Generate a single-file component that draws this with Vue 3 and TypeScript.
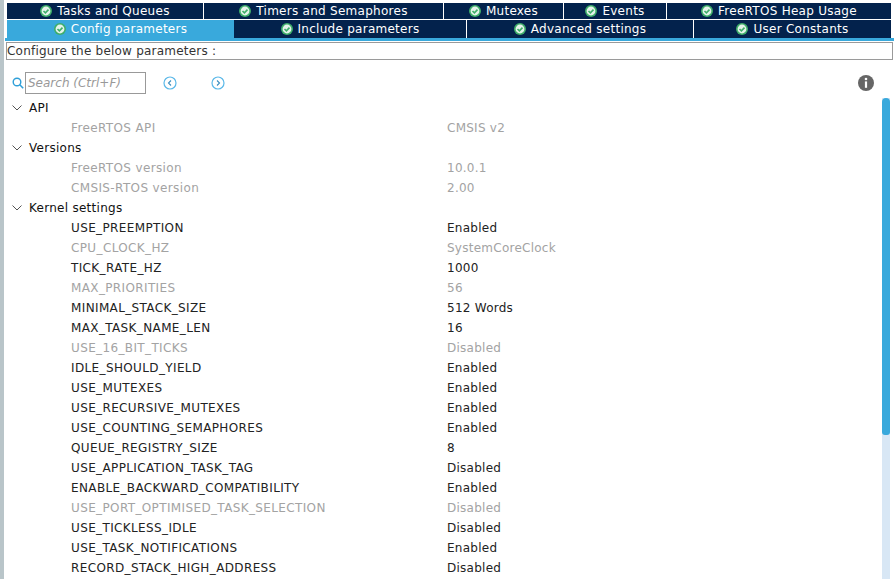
<script setup lang="ts">
interface Row {
  label: string
  value?: string
  off?: boolean
}

const topTabs = [
  { label: 'Tasks and Queues', width: 197 },
  { label: 'Timers and Semaphores', width: 240 },
  { label: 'Mutexes', width: 120 },
  { label: 'Events', width: 103 },
  { label: 'FreeRTOS Heap Usage', width: 224 },
]

const bottomTabs = [
  { label: 'Config parameters', width: 227, active: true },
  { label: 'Include parameters', width: 233 },
  { label: 'Advanced settings', width: 227 },
  { label: 'User Constants', width: 197 },
]

const groups: { title: string; rows: Row[] }[] = [
  { title: 'API', rows: [{ label: 'FreeRTOS API', value: 'CMSIS v2', off: true }] },
  {
    title: 'Versions',
    rows: [
      { label: 'FreeRTOS version', value: '10.0.1', off: true },
      { label: 'CMSIS-RTOS version', value: '2.00', off: true },
    ],
  },
  {
    title: 'Kernel settings',
    rows: [
      { label: 'USE_PREEMPTION', value: 'Enabled' },
      { label: 'CPU_CLOCK_HZ', value: 'SystemCoreClock', off: true },
      { label: 'TICK_RATE_HZ', value: '1000' },
      { label: 'MAX_PRIORITIES', value: '56', off: true },
      { label: 'MINIMAL_STACK_SIZE', value: '512 Words' },
      { label: 'MAX_TASK_NAME_LEN', value: '16' },
      { label: 'USE_16_BIT_TICKS', value: 'Disabled', off: true },
      { label: 'IDLE_SHOULD_YIELD', value: 'Enabled' },
      { label: 'USE_MUTEXES', value: 'Enabled' },
      { label: 'USE_RECURSIVE_MUTEXES', value: 'Enabled' },
      { label: 'USE_COUNTING_SEMAPHORES', value: 'Enabled' },
      { label: 'QUEUE_REGISTRY_SIZE', value: '8' },
      { label: 'USE_APPLICATION_TASK_TAG', value: 'Disabled' },
      { label: 'ENABLE_BACKWARD_COMPATIBILITY', value: 'Enabled' },
      { label: 'USE_PORT_OPTIMISED_TASK_SELECTION', value: 'Disabled', off: true },
      { label: 'USE_TICKLESS_IDLE', value: 'Disabled' },
      { label: 'USE_TASK_NOTIFICATIONS', value: 'Enabled' },
      { label: 'RECORD_STACK_HIGH_ADDRESS', value: 'Disabled' },
    ],
  },
]
</script>

<template>
  <div class="page">
    <div class="main">
      <div class="tabs top">
        <div v-for="t in topTabs" :key="t.label" class="tab" :style="{ width: t.width + 'px' }">
          <svg class="check" viewBox="0 0 12 12">
            <circle cx="6" cy="6" r="6" fill="#3fae6a" />
            <circle cx="6" cy="6" r="4.4" fill="#e4f3ea" />
            <path d="M3.5 6l1.9 1.9 3.1-3.3" fill="none" stroke="#3fae6a" stroke-width="1.6" />
          </svg>
          {{ t.label }}
        </div>
      </div>
      <div class="tabs bottom">
        <div
          v-for="t in bottomTabs"
          :key="t.label"
          class="tab"
          :class="{ active: t.active }"
          :style="{ width: t.width + 'px' }"
        >
          <svg class="check" viewBox="0 0 12 12">
            <circle cx="6" cy="6" r="6" fill="#3fae6a" />
            <circle cx="6" cy="6" r="4.4" fill="#e4f3ea" />
            <path d="M3.5 6l1.9 1.9 3.1-3.3" fill="none" stroke="#3fae6a" stroke-width="1.6" />
          </svg>
          {{ t.label }}
        </div>
      </div>
      <div class="tab-line"></div>
      <div class="hint">Configure the below parameters :</div>

      <div class="toolbar">
        <svg class="search-icon" viewBox="0 0 12 12">
          <circle cx="5" cy="5" r="3.8" fill="none" stroke="#2f9fd8" stroke-width="1.4" />
          <path d="M7.8 7.8L11.2 11.2" stroke="#2f9fd8" stroke-width="1.6" />
        </svg>
        <div class="search">Search (Ctrl+F)</div>
        <svg class="nav prev" viewBox="0 0 14 14">
          <circle cx="7" cy="7" r="6" fill="none" stroke="#5ab8e8" stroke-width="1.2" />
          <path d="M8 4.5L5.5 7 8 9.5" fill="none" stroke="#3a8fc0" stroke-width="1.1" />
        </svg>
        <svg class="nav next" viewBox="0 0 14 14">
          <circle cx="7" cy="7" r="6" fill="none" stroke="#5ab8e8" stroke-width="1.2" />
          <path d="M6 4.5L8.5 7 6 9.5" fill="none" stroke="#3a8fc0" stroke-width="1.1" />
        </svg>
        <svg class="info" viewBox="0 0 16 16">
          <circle cx="8" cy="8" r="8" fill="#666" />
          <circle cx="8" cy="4" r="1.3" fill="#fff" />
          <rect x="6.9" y="6.4" width="2.2" height="6.4" fill="#fff" />
        </svg>
      </div>

      <div class="tree">
        <template v-for="g in groups" :key="g.title">
          <div class="group">
            <svg class="chevron" viewBox="0 0 10 6">
              <path d="M0.5 0.5L5 5 9.5 0.5" fill="none" stroke="#555" stroke-width="1" />
            </svg>
            {{ g.title }}
          </div>
          <div v-for="r in g.rows" :key="r.label" class="row" :class="{ off: r.off }">
            <span class="label">{{ r.label }}</span>
            <span class="value">{{ r.value }}</span>
          </div>
        </template>
      </div>

      <div class="scrollbar"><div class="thumb"></div></div>
    </div>
  </div>
</template>

<style scoped>
.page {
  width: 894px;
  height: 579px;
  display: flex;
  overflow: hidden;
  background: #fff;
  border-left: 4px solid #b9c5c9;
  box-sizing: border-box;
  font-family: "DejaVu Sans", "Open Sans", sans-serif;
  font-size: 12px;
}

.main {
  position: relative;
  flex: 1;
  padding-top: 3px;
  min-width: 0;
}

.tabs {
  display: flex;
  margin-left: 3px;
}

.tabs.top {
  height: 16px;
  margin-bottom: 1px;
}

.tabs.bottom {
  height: 18px;
}

.tab {
  display: flex;
  align-items: center;
  justify-content: center;
  gap: 5px;
  box-sizing: border-box;
  background: #03224c;
  color: #fff;
  border-right: 1px solid #fff;
  letter-spacing: 0.27px;
}

.tab:last-child {
  border-right: 0;
}

.tab.active {
  background: #39a9dc;
  border-right: 0;
}

.check {
  width: 12px;
  height: 12px;
  flex: none;
}

.tab-line {
  height: 3px;
  margin-left: 1px;
  background: #39a9dc;
}

.hint {
  height: 18px;
  line-height: 16px;
  margin: 1px 1px 0 2px;
  box-sizing: border-box;
  border: 1px solid #9a9a9a;
  color: #333;
  letter-spacing: 0.22px;
}

.toolbar {
  position: relative;
  display: flex;
  align-items: center;
  height: 22px;
  margin-top: 12px;
  padding-left: 8px;
}

.search-icon {
  width: 12px;
  height: 12px;
  margin-right: 1px;
}

.search {
  width: 121px;
  height: 22px;
  line-height: 20px;
  box-sizing: border-box;
  border: 1px solid #999;
  padding-left: 2px;
  color: #999;
  font-style: italic;
}

.nav {
  width: 14px;
  height: 14px;
}

.prev {
  margin-left: 17px;
}

.next {
  margin-left: 34px;
}

.info {
  position: absolute;
  right: 20px;
  top: 3px;
  width: 16px;
  height: 16px;
}

.tree {
  margin-top: 4px;
  color: #222;
}

.group,
.row {
  height: 20px;
  line-height: 20px;
  white-space: nowrap;
}

.group {
  display: flex;
  align-items: center;
  padding-left: 8px;
  color: #111;
  letter-spacing: 0.27px;
}

.chevron {
  width: 10px;
  height: 6px;
  margin-right: 7px;
}

.row {
  display: flex;
  padding-left: 67px;
}

.label {
  width: 376px;
  flex: none;
  letter-spacing: 0.37px;
}

.value {
  letter-spacing: 0.25px;
}

.row.off {
  color: #a3a3a3;
}

.scrollbar {
  position: absolute;
  left: 878px;
  top: 98px;
  bottom: 0;
  width: 8px;
  background: #d8e7f5;
}

.thumb {
  height: 337px;
  border-radius: 4px 4px 3px 3px;
  background: #39a9dc;
}
</style>

<style>
html,
body {
  margin: 0;
  background: #fff;
}
</style>
